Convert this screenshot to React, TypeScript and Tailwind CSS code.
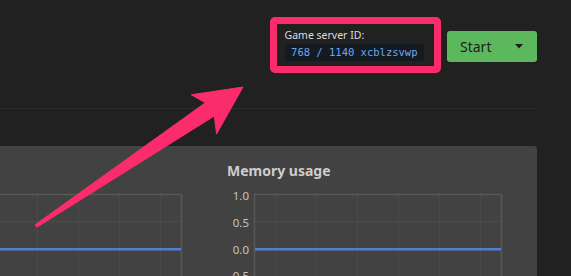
import React from "react";

function Chart({ showLabels }: { showLabels: boolean }) {
  const vx = [48, 89, 130, 171, 212, 253];
  const hy = [35.5, 90.5];
  const labels = [
    { t: "1.0", y: 14 },
    { t: "0.5", y: 41 },
    { t: "0.0", y: 68 },
    { t: "-0.5", y: 94 },
  ];
  return (
    <svg width="276" height="110" className="block overflow-visible">
      {vx.map((x) => (
        <line key={x} x1={x + 0.5} y1={8.5} x2={x + 0.5} y2={110} stroke="#4a4a4a" strokeWidth="1" />
      ))}
      {hy.map((y) => (
        <line key={y} x1={27.5} y1={y} x2={274.5} y2={y} stroke="#4b4b4b" strokeWidth="1" />
      ))}
      <line x1={27.5} y1={8.5} x2={274.5} y2={8.5} stroke="#585858" strokeWidth="1.5" />
      <line x1={27.5} y1={8} x2={27.5} y2={110} stroke="#585858" strokeWidth="1.5" />
      <line x1={274.5} y1={8} x2={274.5} y2={110} stroke="#585858" strokeWidth="1.5" />
      <line x1={28} y1={63.3} x2={274} y2={63.3} stroke="#4f7fd3" strokeWidth="2.6" />
      {showLabels &&
        labels.map((l) => (
          <text
            key={l.t}
            x={22}
            y={l.y}
            textAnchor="end"
            fill="#c4c4c4"
            fontSize="11.5"
            fontFamily="'Noto Sans', sans-serif"
          >
            {l.t}
          </text>
        ))}
    </svg>
  );
}

function ChartColumn({ title }: { title?: string }) {
  return (
    <div className="w-[275px] shrink-0 flex flex-col">
      <div className="h-[20px] text-[14px] leading-[20px] font-bold text-[#cdcdcd]">{title}</div>
      <div className="mt-[4.7px]">
        <Chart showLabels={!!title} />
      </div>
    </div>
  );
}

export default function App() {
  return (
    <div
      className="relative w-full h-[276px] overflow-hidden bg-[#212121]"
      style={{ fontFamily: "'Noto Sans', sans-serif" }}
    >
      <div className="w-[537px] flex flex-col">
        <header className="h-[109px] border-b border-[#2d2d2d] flex justify-end items-start pt-[29px] gap-[23px]">
          <div className="flex flex-col items-start">
            <div className="text-[10.5px] leading-[13px] text-[#dcdcdc]">Game server ID:</div>
            <div
              className="mt-[1.6px] h-[17.4px] leading-[17.4px] px-[6.5px] rounded-[3px] bg-[#141a21] text-[10.5px] text-[#6fa4f4]"
              style={{ fontFamily: "'DejaVu Sans Mono', monospace" }}
            >
              768 / 1140 xcblzsvwp
            </div>
          </div>
          <button className="mt-[2px] w-[90px] h-[31px] rounded-[3px] bg-[#5cb85c] flex items-center justify-between pl-[13px] pr-[14px] text-[14px] text-[#1c1c1c]">
            <span className="leading-[20px]">Start</span>
            <svg width="8" height="5" viewBox="0 0 8 5" className="block">
              <path d="M0 0 L8 0 L4 4.5 Z" fill="#1c1c1c" />
            </svg>
          </button>
        </header>
        <section className="mt-[37px] ml-[-128px] w-[665px] h-[200px] rounded-[3px] bg-[#424242] flex gap-[45px] px-[35px] pt-[15px]">
          <ChartColumn />
          <ChartColumn title="Memory usage" />
        </section>
      </div>

      <div className="absolute left-[270px] top-[17px] w-[171px] h-[56px] rounded-[5px] border-[7px] border-[#fb2c6c] pointer-events-none" />

      <svg className="absolute left-0 top-0 pointer-events-none" width="571" height="276">
        <path
          d="M 35.16 224.76 L 205.37 102.75 L 191.34 94.78 L 243 87 L 216.58 133.92 L 214.32 116.01 L 36.84 227.24 Z"
          fill="#fb2c6c"
          stroke="#fb2c6c"
          strokeWidth="1"
          strokeLinejoin="round"
        />
      </svg>
    </div>
  );
}
